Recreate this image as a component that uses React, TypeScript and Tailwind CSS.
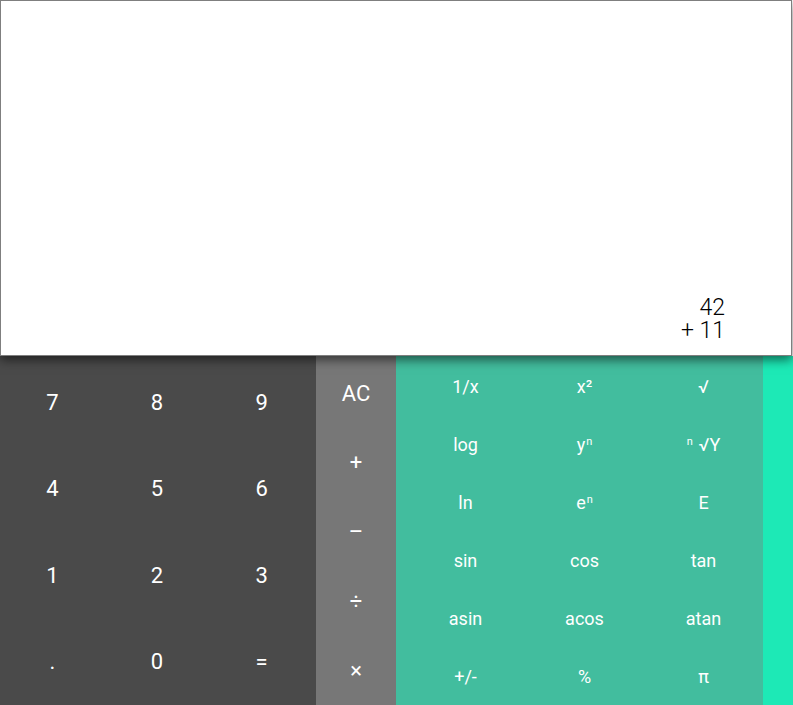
import React from "react";

const digits = ["7", "8", "9", "4", "5", "6", "1", "2", "3", ".", "0", "="];
const ops = ["AC", "+", "–", "÷", "×"];

function Sup({ base, pre }: { base: string; pre?: boolean }) {
  return pre ? (
    <span>
      <span className="text-[11px] align-[6px] mr-[6px]">n</span>√Y
    </span>
  ) : (
    <span>
      {base}
      <span className="text-[11px] align-[6px] ml-[1px]">n</span>
    </span>
  );
}

export default function App() {
  const sci: React.ReactNode[] = [
    "1/x",
    "x²",
    "√",
    "log",
    <Sup base="y" />,
    <Sup base="" pre />,
    "ln",
    <Sup base="e" />,
    "E",
    "sin",
    "cos",
    "tan",
    "asin",
    "acos",
    "atan",
    "+/-",
    "%",
    "π",
  ];
  return (
    <div
      className="w-[793px] h-[705px] flex flex-col overflow-hidden bg-white"
      style={{ fontFamily: "Roboto, 'Liberation Sans', sans-serif" }}
    >
      <div className="relative z-10 h-[356px] w-[792px] border border-[#7f7f7f] bg-white shadow-[0_4px_10px_rgba(0,0,0,0.55)] flex flex-col justify-end items-end pr-[66px] pb-[13px]">
        <div className="text-[23px] leading-[23px] font-light text-black text-right">
          <div>42</div>
          <div>+ 11</div>
        </div>
      </div>
      <div className="flex-1 flex">
        <div className="w-[316px] bg-[#4a4a4a] pt-[3px] pr-[2px] grid grid-cols-3 grid-rows-4 text-white text-[22px]">
          {digits.map((d) => (
            <div key={d} className="flex items-center justify-center">
              {d}
            </div>
          ))}
        </div>
        <div className="w-[80px] bg-[#777777] pt-[3px] grid grid-rows-5 text-white text-[22px]">
          {ops.map((o) => (
            <div key={o} className="flex items-center justify-center">
              {o}
            </div>
          ))}
        </div>
        <div className="w-[367px] bg-[#42bd9e] pl-[10px] pt-[1px] grid grid-cols-3 grid-rows-6 text-white text-[18px]">
          {sci.map((s, i) => (
            <div key={i} className="flex items-center justify-center">
              {s}
            </div>
          ))}
        </div>
        <div className="flex-1 bg-[#1de9b6]" />
      </div>
    </div>
  );
}
